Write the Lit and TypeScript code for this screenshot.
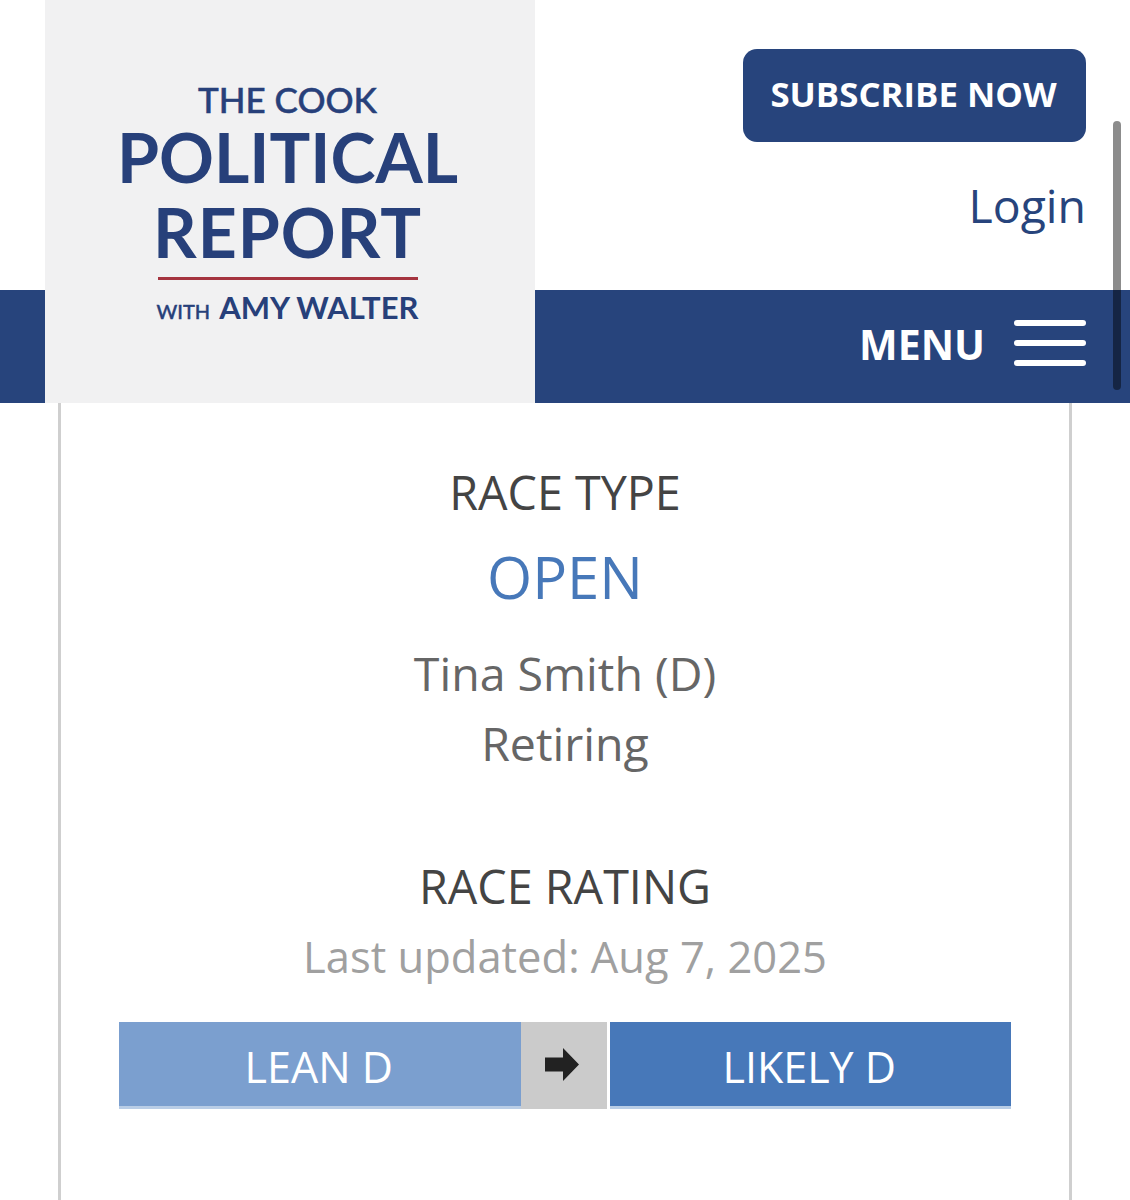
import { LitElement, html, css } from "lit";
import { customElement } from "lit/decorators.js";

@customElement("app-root")
export default class AppRoot extends LitElement {
    static styles = css`
        :host {
            display: block;
            position: relative;
            height: 1200px;
            overflow: hidden;
            background: #fff;
            font-family: "Open Sans", sans-serif;
        }
        .header {
            display: grid;
            grid-template-columns: 45px 490px 1fr;
            grid-template-rows: 290px 113px;
        }
        .bar-left {
            grid-column: 1;
            grid-row: 2;
            background: #27447c;
        }
        .logo {
            grid-column: 2;
            grid-row: 1 / span 2;
            background: #f1f1f2;
            color: #27407a;
            font-family: "Lato", sans-serif;
            display: flex;
            flex-direction: column;
            align-items: center;
            padding: 79px 5px 0 0;
            box-sizing: border-box;
        }
        .logo-the {
            font-size: 35px;
            line-height: 40px;
            font-weight: 500;
            -webkit-text-stroke: 0.5px #27407a;
        }
        .logo-big {
            font-size: 68px;
            line-height: 75px;
            font-weight: 700;
        }
        .logo-report {
            letter-spacing: 1px;
        }
        .logo-rule {
            width: 260px;
            height: 3px;
            background: #a5343f;
            margin: 8px 0 9px;
        }
        .logo-with {
            display: flex;
            align-items: baseline;
            gap: 9px;
            font-size: 31px;
            line-height: 36px;
            font-weight: 700;
        }
        .logo-with small {
            font-size: 20px;
            font-weight: 500;
            -webkit-text-stroke: 0.4px #27407a;
        }
        .top-right {
            grid-column: 3;
            grid-row: 1;
            display: flex;
            flex-direction: column;
            align-items: flex-end;
            padding: 49px 44px 0 0;
        }
        .subscribe {
            width: 343px;
            height: 93px;
            box-sizing: border-box;
            padding: 0 2px 5px 0;
            border-radius: 14px;
            background: #27447c;
            color: #fff;
            font-size: 34.8px;
            font-weight: 700;
            display: flex;
            align-items: center;
            justify-content: center;
        }
        .login {
            color: #27447c;
            font-size: 46.4px;
            line-height: 62px;
            margin-top: 32px;
        }
        .bar-right {
            grid-column: 3;
            grid-row: 2;
            background: #27447c;
            display: flex;
            align-items: center;
            justify-content: flex-end;
            gap: 29px;
            padding: 0 44px 6px 0;
            color: #fff;
            font-size: 41px;
            font-weight: 700;
        }
        .burger {
            width: 72px;
            margin-bottom: 2px;
            display: flex;
            flex-direction: column;
            gap: 14px;
        }
        .burger span {
            height: 6px;
            border-radius: 3px;
            background: #fff;
        }
        .card {
            margin: 0 58px;
            height: 797px;
            border: solid #cfcfcf;
            border-width: 0 3px;
            display: flex;
            flex-direction: column;
            align-items: center;
            text-align: center;
        }
        .label {
            color: #444;
            font-size: 46.7px;
            line-height: 62px;
        }
        .race-type {
            margin-top: 58px;
        }
        .open {
            color: #4778b9;
            font-size: 58px;
            line-height: 80px;
            margin-top: 14px;
        }
        .who {
            color: #666;
            font-size: 46.5px;
            line-height: 70px;
            margin-top: 21px;
        }
        .race-rating {
            margin-top: 77px;
        }
        .updated {
            color: #a0a0a0;
            font-size: 43.5px;
            line-height: 60px;
            margin-top: 10px;
        }
        .rating {
            display: flex;
            width: 892px;
            height: 87px;
            margin-top: 35px;
        }
        .seg {
            flex: 1 1 0;
            box-sizing: border-box;
            color: #fff;
            font-size: 43px;
            display: flex;
            align-items: center;
            justify-content: center;
            padding-top: 5px;
            border-bottom: 3px solid #b9cde6;
        }
        .lean {
            background: #7b9fcf;
            padding-right: 2px;
        }
        .likely {
            background: #4778b9;
            padding-right: 2px;
        }
        .arrow {
            flex: none;
            width: 86px;
            margin-right: 3px;
            background: #cbcbcb;
            display: flex;
            align-items: center;
            justify-content: center;
            padding: 0 3px 2px 0;
            box-sizing: border-box;
        }
        .scrollbar {
            position: absolute;
            left: 1113px;
            top: 121px;
            width: 8px;
            height: 269px;
            border-radius: 4px;
            background: rgba(0, 0, 0, 0.45);
        }
    `;

    render() {
        return html`
            <div class="header">
                <div class="bar-left"></div>
                <div class="logo">
                    <div class="logo-the">THE COOK</div>
                    <div class="logo-big">POLITICAL</div>
                    <div class="logo-big logo-report">REPORT</div>
                    <div class="logo-rule"></div>
                    <div class="logo-with"><small>WITH</small>AMY WALTER</div>
                </div>
                <div class="top-right">
                    <div class="subscribe">SUBSCRIBE NOW</div>
                    <div class="login">Login</div>
                </div>
                <div class="bar-right">
                    MENU
                    <div class="burger"><span></span><span></span><span></span></div>
                </div>
            </div>
            <div class="card">
                <div class="label race-type">RACE TYPE</div>
                <div class="open">OPEN</div>
                <div class="who">Tina Smith (D)<br />Retiring</div>
                <div class="label race-rating">RACE RATING</div>
                <div class="updated">Last updated: Aug 7, 2025</div>
                <div class="rating">
                    <div class="seg lean">LEAN D</div>
                    <div class="arrow">
                        <svg width="34" height="33" viewBox="0 0 34 33">
                            <path d="M0 9.5H18V0L34 16.5L18 33V23.5H0Z" fill="#222" />
                        </svg>
                    </div>
                    <div class="seg likely">LIKELY D</div>
                </div>
            </div>
            <div class="scrollbar"></div>
        `;
    }
}
